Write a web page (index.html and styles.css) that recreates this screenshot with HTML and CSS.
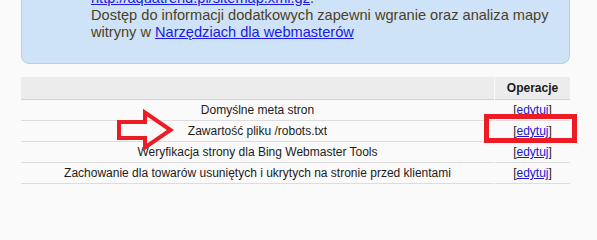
FILE: index.html
```html
<!DOCTYPE html>
<html lang="pl">
<head>
<meta charset="utf-8">
<title>Ustawienia</title>
<link rel="stylesheet" href="styles.css">
</head>
<body>
<div class="page">
  <div class="info-box">
    <p class="info-text"><a href="#">http://aquatrend.pl/sitemap.xml.gz</a>.<br>Dostęp do informacji dodatkowych zapewni wgranie oraz analiza mapy<br>witryny w <a href="#">Narzędziach dla webmasterów</a></p>
  </div>

  <div class="settings">
    <div class="cell head"></div>
    <div class="cell head op">Operacje</div>

    <div class="cell name">Domyślne meta stron</div>
    <div class="cell op">[<a href="#">edytuj</a>]</div>

    <div class="cell name">Zawartość pliku /robots.txt</div>
    <div class="cell op">[<a href="#">edytuj</a>]</div>

    <div class="cell name">Weryfikacja strony dla Bing Webmaster Tools</div>
    <div class="cell op">[<a href="#">edytuj</a>]</div>

    <div class="cell name">Zachowanie dla towarów usuniętych i ukrytych na stronie przed klientami</div>
    <div class="cell op">[<a href="#">edytuj</a>]</div>
  </div>

  <svg class="arrow" viewBox="115 106 64 48" width="64" height="48" aria-hidden="true">
    <polygon points="119,122 145,122 145,112.5 170.5,130 145,147.5 145,138 119,138" fill="none" stroke="#ed1c24" stroke-width="4" stroke-linejoin="miter"/>
  </svg>
  <div class="highlight"></div>
</div>
</body>
</html>
```
FILE: styles.css
```css
html, body {
  margin: 0;
  padding: 0;
  background: #fafafa;
}

.page {
  position: relative;
  width: 597px;
  height: 219px;
  overflow: hidden;
  padding-left: 21px;
  box-sizing: border-box;
  font-family: "Liberation Sans", Arial, sans-serif;
}

.info-box {
  width: 549px;
  box-sizing: border-box;
  margin-top: -21px;
  background: #cfe3f8;
  border: 1px solid #b7cee8;
  border-radius: 8px;
  padding: 10px 4px 22px 69px;
}

.info-text {
  margin: 0;
  font-size: 14.6px;
  line-height: 17px;
  color: #4d3f25;
  white-space: nowrap;
}

.info-text a {
  color: #1a1ae6;
  text-decoration: underline;
}

.settings {
  display: grid;
  grid-template-columns: 473px 75px;
  column-gap: 1px;
  width: 549px;
  margin-top: 13px;
  font-size: 12px;
  color: #1c1c1c;
}

.cell {
  height: 20px;
  line-height: 20px;
  border-bottom: 1px solid #dddddd;
  text-align: center;
  white-space: nowrap;
}

.cell.head {
  height: 22px;
  line-height: 22px;
  background: #ececec;
  border-bottom-color: #d2d2d2;
  font-weight: bold;
  color: #1a1a1a;
}

.cell a {
  color: #1616d8;
  text-decoration: underline;
}

.arrow {
  position: absolute;
  left: 115px;
  top: 106px;
}

.highlight {
  position: absolute;
  left: 484px;
  top: 114px;
  width: 93px;
  height: 29px;
  box-sizing: border-box;
  border: 5px solid #ed1c24;
}
```
